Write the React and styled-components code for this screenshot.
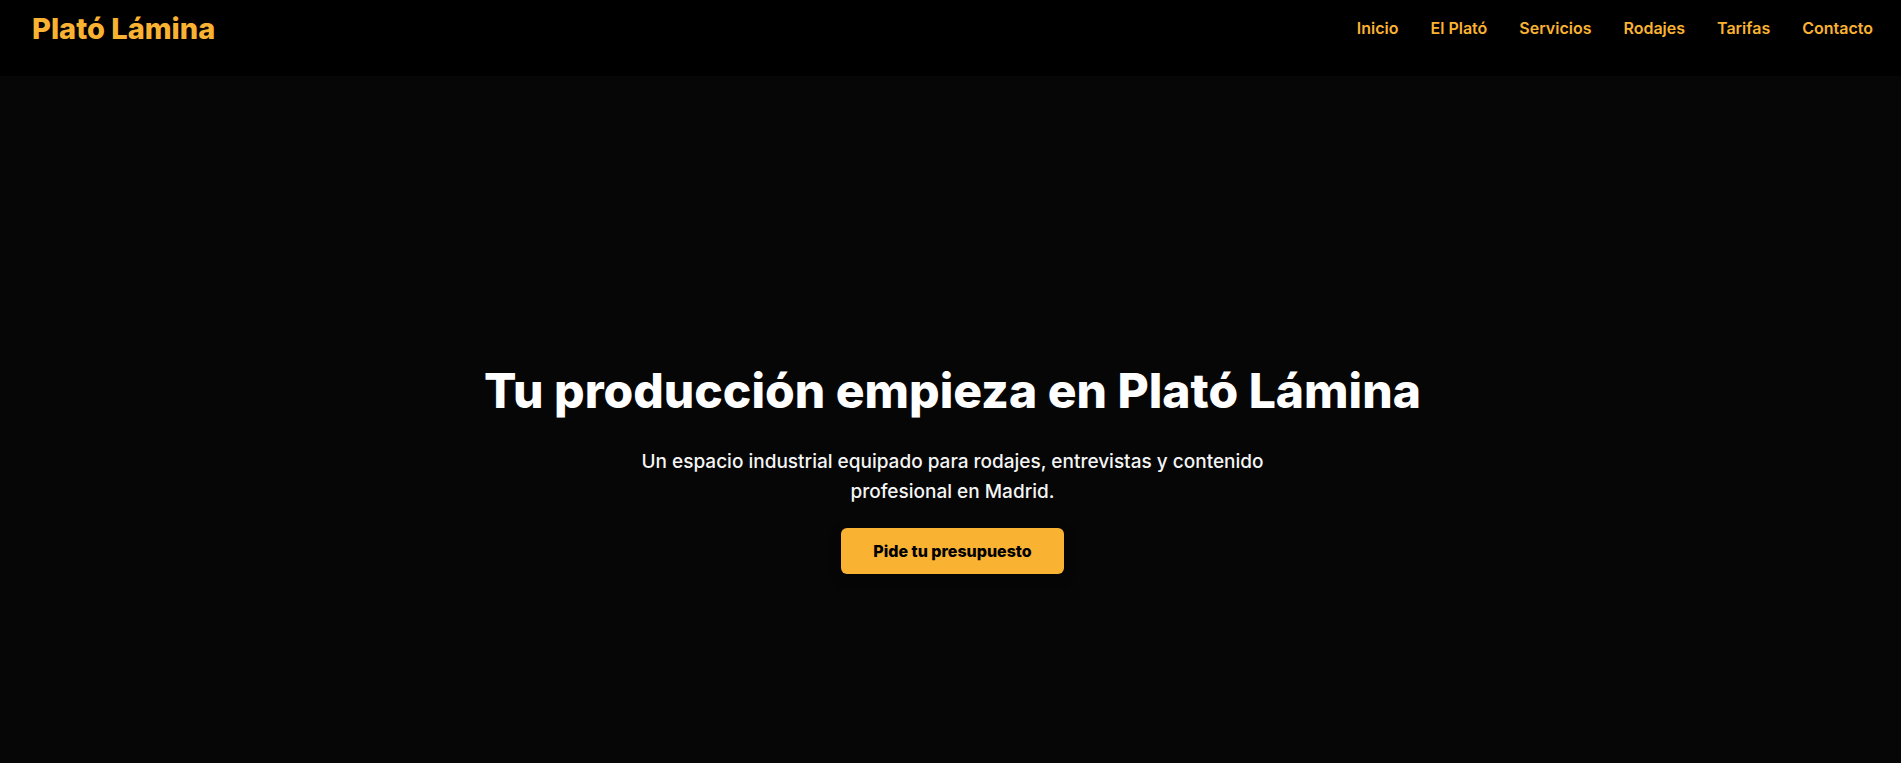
import React from "react";
import styled, { createGlobalStyle } from "styled-components";

const GlobalStyle = createGlobalStyle`
  * { box-sizing: border-box; margin: 0; padding: 0; }
  body { background: #060606; color: #fff; font-family: Inter, sans-serif; line-height: 1.6; }
`;

const Page = styled.div`
  display: flex;
  flex-direction: column;
  min-height: 100vh;
`;

const Header = styled.header`
  display: flex;
  justify-content: space-between;
  align-items: flex-start;
  padding: 12px 28px 12px 32px;
  min-height: 76px;
  background: #000;
`;

const Logo = styled.a`
  color: #fab233;
  font-size: 29px;
  font-weight: 800;
  line-height: 34px;
  text-decoration: none;
`;

const Nav = styled.nav`
  display: flex;
  gap: 32px;
`;

const NavLink = styled.a`
  color: #fab233;
  font-size: 16px;
  font-weight: 600;
  line-height: 32px;
  text-decoration: none;
`;

const Hero = styled.main`
  flex: 1;
  display: flex;
  flex-direction: column;
  align-items: center;
  justify-content: center;
  padding: 85px 28px 0 32px;
  text-align: center;
`;

const Title = styled.h1`
  font-size: 48px;
  font-weight: 800;
  line-height: 80px;
  margin-bottom: 16px;
`;

const Lead = styled.p`
  max-width: 640px;
  font-size: 19px;
  font-weight: 500;
  line-height: 30px;
  margin-bottom: 21px;
  color: #f5f5f5;
`;

const CallToAction = styled.button`
  padding: 10px 32px;
  border: 0;
  border-radius: 6px;
  background: #fab233;
  box-shadow: 0 4px 12px rgba(0, 0, 0, 0.3);
  color: #000;
  font: 800 16px/26px Inter, sans-serif;
  cursor: pointer;
`;

const links = ["Inicio", "El Plató", "Servicios", "Rodajes", "Tarifas", "Contacto"];

export default function App() {
  return (
    <Page>
      <GlobalStyle />
      <Header>
        <Logo href="#inicio">Plató Lámina</Logo>
        <Nav aria-label="Principal">
          {links.map((label) => (
            <NavLink key={label} href="#">{label}</NavLink>
          ))}
        </Nav>
      </Header>
      <Hero>
        <Title>Tu producción empieza en Plató Lámina</Title>
        <Lead>Un espacio industrial equipado para rodajes, entrevistas y contenido profesional en Madrid.</Lead>
        <CallToAction type="button">Pide tu presupuesto</CallToAction>
      </Hero>
    </Page>
  );
}
